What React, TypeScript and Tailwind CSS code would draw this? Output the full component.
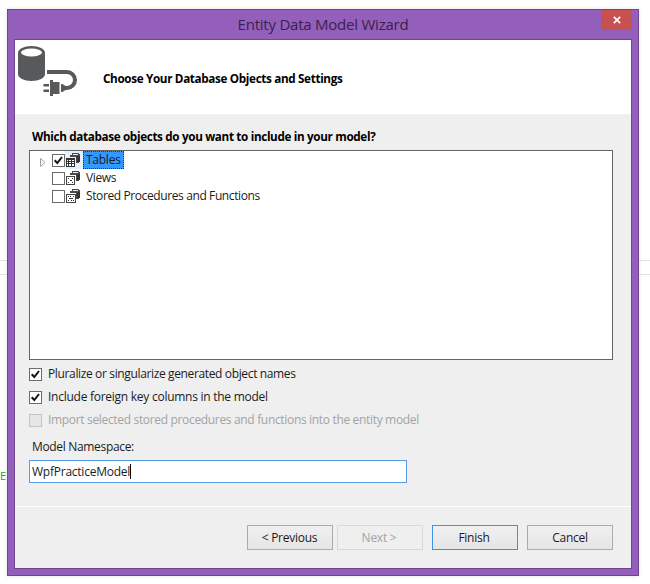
import React, { useState } from 'react';
import clsx from 'clsx';

type NodeKind = 'tables' | 'views' | 'procedures';

const treeNodes: { kind: NodeKind; label: string; tracking: string }[] = [
  { kind: 'tables', label: 'Tables', tracking: 'tracking-[-0.25px]' },
  { kind: 'views', label: 'Views', tracking: 'tracking-[-0.35px]' },
  { kind: 'procedures', label: 'Stored Procedures and Functions', tracking: 'tracking-[-0.39px]' },
];

function CheckMark() {
  return (
    <svg width="11" height="11" viewBox="0 0 11 11" fill="none">
      <path d="M1.7 5.3 4.3 8 9 2" stroke="#111" strokeWidth="2" />
    </svg>
  );
}

function CheckBox({ checked, disabled, onClick }: { checked: boolean; disabled?: boolean; onClick?: () => void }) {
  return (
    <button
      type="button"
      role="checkbox"
      aria-checked={checked}
      disabled={disabled}
      onClick={onClick}
      className={clsx(
        'flex size-[13px] shrink-0 items-center justify-center border',
        disabled ? 'border-[#c3c3c3] bg-[#e6e6e6]' : 'border-[#6b6b6b] bg-white'
      )}
    >
      {checked && <CheckMark />}
    </button>
  );
}

function NodeIcon({ kind }: { kind: NodeKind }) {
  return (
    <svg width="16" height="16" viewBox="0 0 16 16" shapeRendering="crispEdges">
      <path d="M7 1h7v1h1v8h-1v1h-3V5H5V3h2z" fill="#4a4a4a" />
      <path d="M8 2h5v1H8z" fill="#efefef" />
      <path d="M12 4h3v6h-3z" fill="#333" />
      {kind === 'tables' && (
        <>
          <path d="M1 6h9v9H1z" fill="#333" />
          <path d="M2 8h1v1H2zM4 8h2v1H4zM7 8h2v1H7zM2 10h1v1H2zM4 10h2v1H4zM7 10h2v1H7zM2 12h1v2H2zM4 12h2v2H4zM7 12h2v2H7z" fill="#fff" />
        </>
      )}
      {kind === 'views' && (
        <>
          <path d="M1.5 6.5h8v8h-8z" fill="#fff" stroke="#444" />
          <path d="M3 8h1v1H3zM7 8h1v1H7zM5 10h2v1H5zM3 12h1v1H3zM7 12h1v1H7z" fill="#333" />
        </>
      )}
      {kind === 'procedures' && (
        <>
          <path d="M1.5 6.5h9v8h-9z" fill="#fff" stroke="#444" />
          <path d="M3 8h1v1H3zM5 8h1v1H5zM8 8h1v1H8zM4 10h4v1H4zM3 12h1v1H3zM6 12h1v1H6zM8 12h1v1H8z" fill="#333" />
        </>
      )}
    </svg>
  );
}

function DatabasePlug() {
  return (
    <svg width="62" height="54" viewBox="0 0 62 54">
      <path d="M0 7v21c0 4 6 7 13.500 7S27 32 27 28V7c0-4-6-7-13.500-7S0 3 0 7z" fill="#58595b" />
      <ellipse cx="13.500" cy="6.500" rx="10.500" ry="4" fill="#fff" />
      <path d="M29 26h20a8 8 0 0 1 0 16h-3" fill="none" stroke="#58595b" strokeWidth="4" />
      <path d="M32 34h3v2h6.500v12H35v2h-3zM43 38h1.500l3 2v4l-3 2H43zM26 38h5v2.500h-5l-1-1.200zM26 43.500h5V46h-5l-1-1.200z" fill="#58595b" />
    </svg>
  );
}

export default function App() {
  const [checked, setChecked] = useState<Record<string, boolean>>({ tables: true });
  const [pluralize, setPluralize] = useState(true);
  const [foreignKeys, setForeignKeys] = useState(true);

  return (
    <div className="relative h-[584px] w-[650px] overflow-hidden bg-white pt-[9px] pl-[7px] font-['Open_Sans','Noto_Sans',sans-serif] text-[12px] leading-4 text-[#1b1b1b]">
      {/* editor page behind the dialog */}
      <div className="absolute top-[260px] left-0 h-[15px] w-full border-y border-[#e3e3e3]" />
      <span className="absolute top-[468px] left-0 text-[11px] text-[#22a322]">E</span>

      <div className="relative flex h-[567px] w-[632px] flex-col border border-[#6f4690] bg-[#945fba] px-[6px] pb-[6px] shadow-[0_0_4px_rgba(0,0,0,0.12)]">
        <div className="relative flex h-[29px] shrink-0 items-center justify-center">
          <h1 className="mb-px text-[15px] leading-5 tracking-[-0.23px] text-[#3a2150]">Entity Data Model Wizard</h1>
          <button type="button" aria-label="Close" className="absolute top-0 right-0 flex h-5 w-[31px] items-center justify-center bg-[#c75050]">
            <svg width="8" height="8" viewBox="0 0 8 8">
              <path d="M.8.800 7.200 7.200M7.200.800.800 7.200" stroke="#fff" strokeWidth="1.700" />
            </svg>
          </button>
        </div>

        <div className="flex min-h-0 flex-1 flex-col border border-[#6f4690] bg-[#efefef]">
          <header className="flex h-[74px] shrink-0 bg-white pt-[6px] pl-[3px]">
            <DatabasePlug />
            <h2 className="mt-6 ml-[23px] text-[11.7px] font-bold tracking-[-0.34px] whitespace-nowrap text-black">Choose Your Database Objects and Settings</h2>
          </header>

          <main className="flex flex-1 flex-col items-start pt-[14px] pl-[14px]">
            <h3 className="ml-[3px] text-[11.7px] font-bold tracking-[-0.34px] whitespace-nowrap text-black">Which database objects do you want to include in your model?</h3>

            <div className="mt-[6px] h-[210px] w-[584px] border border-[#646464] bg-white">
              {treeNodes.map((node) => (
                <div key={node.kind} className="flex h-[18px] items-center pl-[10px]">
                  <span className="w-3">
                    {node.kind === 'tables' && (
                      <svg width="6" height="9" viewBox="0 0 6 9" className="mt-1">
                        <path d="M.5.500v8l4.500-4z" fill="#fff" stroke="#a0a0a0" />
                      </svg>
                    )}
                  </span>
                  <CheckBox
                    checked={!!checked[node.kind]}
                    onClick={() => setChecked((prev) => ({ ...prev, [node.kind]: !prev[node.kind] }))}
                  />
                  <span className={clsx('flex h-[18px] w-[18px] items-center', node.kind === 'tables' && 'bg-[#e3effb]')}>
                    <NodeIcon kind={node.kind} />
                  </span>
                  <span
                    className={clsx(
                      'flex h-[18px] items-center border px-[2px] whitespace-nowrap',
                      node.tracking,
                      node.kind === 'tables' ? 'w-[41px] border-dotted border-[#123a66] bg-[#3399ff]' : 'border-transparent'
                    )}
                  >
                    {node.label}
                  </span>
                </div>
              ))}
            </div>

            <div className="mt-[6px] flex flex-col gap-[7px] whitespace-nowrap">
              <label className="flex items-center gap-[6px]">
                <CheckBox checked={pluralize} onClick={() => setPluralize(!pluralize)} />
                <span className="tracking-[-0.36px]">Pluralize or singularize generated object names</span>
              </label>
              <label className="flex items-center gap-[6px]">
                <CheckBox checked={foreignKeys} onClick={() => setForeignKeys(!foreignKeys)} />
                <span className="tracking-[-0.26px]">Include foreign key columns in the model</span>
              </label>
              <label className="flex items-center gap-[6px] text-[#a3a3a3]">
                <CheckBox checked={false} disabled />
                <span className="tracking-[-0.33px]">Import selected stored procedures and functions into the entity model</span>
              </label>
            </div>

            <label className="mt-[11px] ml-[3px] tracking-[-0.33px]">Model Namespace:</label>
            <div className="mt-[5px] flex h-[23px] w-[378px] items-center border border-[#569de5] bg-white pl-[2px]">
              <span className="tracking-[-0.24px]">WpfPracticeModel</span>
              <span className="h-[15px] w-px bg-black" />
            </div>
          </main>

          <footer className="flex h-[62px] shrink-0 border-t border-white pt-[18px] pl-[232px] tracking-[-0.25px]">
            <button type="button" className="h-[25px] w-[86px] border border-[#acacac] bg-linear-to-b from-[#f0f0f0] to-[#e5e5e5] pr-px">&lt; Previous</button>
            <button type="button" disabled className="ml-1 h-[25px] w-[86px] border border-[#d9d9d9] bg-[#efefef] pr-[2px] text-[#a3a3a3]">Next &gt;</button>
            <button type="button" className="ml-[9px] h-[25px] w-[86px] border border-[#3c93e8] bg-linear-to-b from-[#f0f0f0] to-[#e5e5e5] pr-[2px]">Finish</button>
            <button type="button" className="ml-[9px] h-[25px] w-[86px] border border-[#acacac] bg-linear-to-b from-[#f0f0f0] to-[#e5e5e5]">Cancel</button>
          </footer>
        </div>
      </div>
    </div>
  );
}
